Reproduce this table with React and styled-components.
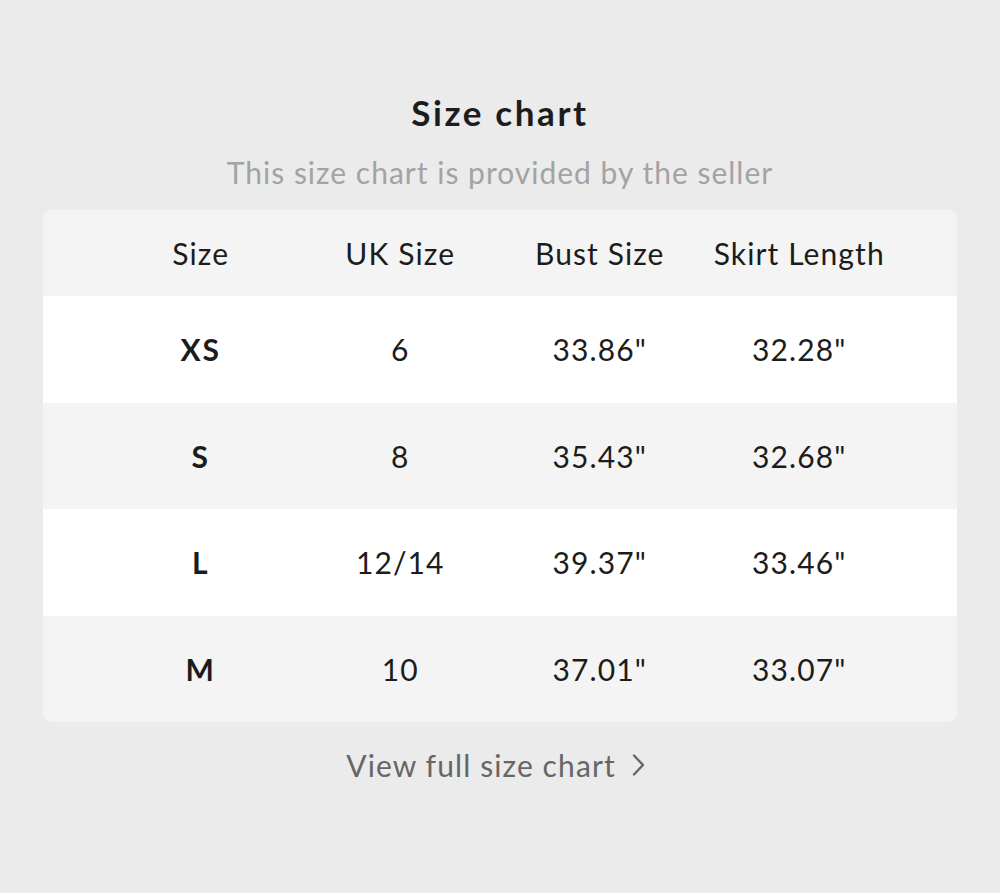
import React from 'react';
import styled, { createGlobalStyle } from 'styled-components';

const GlobalStyle = createGlobalStyle`
  html, body, #root {
    margin: 0;
    padding: 0;
    width: 100%;
    height: 100%;
  }
  body {
    background: #ebebeb;
    font-family: Lato, "Open Sans", sans-serif;
  }
`;

const Page = styled.div`
  width: 1000px;
  height: 893px;
  box-sizing: border-box;
  padding: 89px 43px 0;
  display: flex;
  flex-direction: column;
  align-items: stretch;
`;

const Title = styled.h1`
  margin: 0;
  text-align: center;
  font-size: 35px;
  line-height: 46px;
  font-weight: 700;
  letter-spacing: 2.6px;
  color: #1c1c1c;
`;

const Subtitle = styled.p`
  margin: 19px 0 0;
  text-align: center;
  font-size: 30px;
  line-height: 36px;
  letter-spacing: 1px;
  color: #a3a3a3;
`;

const Card = styled.div`
  margin-top: 20px;
  border-radius: 9px;
  overflow: hidden;
  background: #f4f4f4;
`;

const Row = styled.div`
  display: grid;
  grid-template-columns: repeat(4, 1fr);
  padding: 0 58px;
  height: ${p => (p.$head ? 86 : 106.5)}px;
  align-items: center;
  background: ${p => (p.$alt ? '#f4f4f4' : '#ffffff')};
`;

const Cell = styled.div`
  text-align: center;
  font-size: 30px;
  letter-spacing: ${p => (p.$bold ? 2 : 1.1)}px;
  color: #1c1c1c;
  font-weight: ${p => (p.$bold ? 700 : 400)};
  white-space: nowrap;
`;

const Link = styled.a`
  margin-top: 25px;
  align-self: center;
  display: flex;
  align-items: center;
  gap: 14px;
  padding-right: 8px;
  font-size: 30px;
  line-height: 36px;
  letter-spacing: 1.1px;
  color: #666666;
  text-decoration: none;
  cursor: pointer;
`;

const rows = [
  ['XS', '6', '33.86"', '32.28"'],
  ['S', '8', '35.43"', '32.68"'],
  ['L', '12/14', '39.37"', '33.46"'],
  ['M', '10', '37.01"', '33.07"'],
];

export default function App() {
  return (
    <>
      <GlobalStyle />
      <Page>
        <Title>Size chart</Title>
        <Subtitle>This size chart is provided by the seller</Subtitle>
        <Card>
          <Row $head $alt>
            {['Size', 'UK Size', 'Bust Size', 'Skirt Length'].map(h => (
              <Cell key={h}>{h}</Cell>
            ))}
          </Row>
          {rows.map((r, i) => (
            <Row key={r[0]} $alt={i % 2 === 1}>
              {r.map((c, j) => (
                <Cell key={j} $bold={j === 0}>{c}</Cell>
              ))}
            </Row>
          ))}
        </Card>
        <Link>
          View full size chart
          <svg width="16" height="26" viewBox="0 0 16 26" fill="none">
            <path d="M4 3.5l9 9.5-9 9.5" stroke="#666666" strokeWidth="2.4" strokeLinecap="round" strokeLinejoin="round" />
          </svg>
        </Link>
      </Page>
    </>
  );
}
